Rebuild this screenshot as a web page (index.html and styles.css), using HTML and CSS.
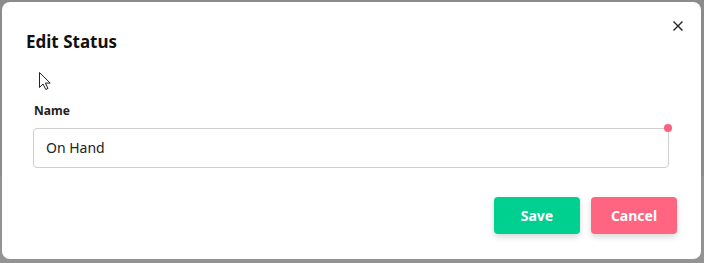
FILE: index.html
```html
<!DOCTYPE html>
<html>
<head>
<meta charset="utf-8">
<link rel="stylesheet" href="styles.css">
</head>
<body>
<div class="modal">
  <div class="header">
    <h2 class="title">Edit Status</h2>
    <button class="close" aria-label="Close">
      <svg width="10" height="10" viewBox="0 0 10 10"><path d="M1 1L9 9M9 1L1 9" stroke="#222" stroke-width="1.4" fill="none" stroke-linecap="square"/></svg>
    </button>
  </div>
  <svg class="cursor" width="14" height="20" viewBox="0 0 14 20"><path d="M1.5 1.5V16.5L5 13L7.8 18.5L10 17.4L7.3 12.1H12.2Z" fill="#fff" stroke="#222" stroke-width="1" stroke-linejoin="round"/></svg>
  <div class="body">
    <label class="label">Name</label>
    <div class="field">
      <div class="input">On Hand</div>
      <span class="dot"></span>
    </div>
  </div>
  <div class="footer">
    <button class="btn save">Save</button>
    <button class="btn cancel">Cancel</button>
  </div>
</div>
</body>
</html>
```
FILE: styles.css
```css
html, body { margin: 0; padding: 0; }
body {
  width: 704px;
  height: 263px;
  background: linear-gradient(#8b8b8b 0, #8b8b8b 176px, #939393 176px);
  font-family: "Noto Sans", "Open Sans", sans-serif;
  overflow: hidden;
}
.modal {
  position: relative;
  margin: 2px 0 0 2px;
  width: 699px;
  height: 257px;
  background: #fff;
  border-radius: 8px;
  box-sizing: border-box;
  padding-top: 26px;
}
.header {
  display: flex;
  justify-content: space-between;
  padding-left: 24px;
  height: 28px;
}
.title {
  margin: 0;
  font-size: 17px;
  font-weight: 700;
  line-height: 28px;
  color: #111;
}
.close {
  position: absolute;
  top: 16px;
  right: 15px;
  width: 16px;
  height: 16px;
  padding: 0;
  border: 0;
  background: none;
  display: flex;
  align-items: center;
  justify-content: center;
}
.cursor {
  position: absolute;
  left: 36px;
  top: 69px;
}
.body {
  padding: 47px 32px 0 31px;
}
.label {
  display: block;
  font-size: 12px;
  font-weight: 700;
  line-height: 16px;
  color: #222;
  margin-left: 1px;
}
.field {
  position: relative;
  margin-top: 9px;
}
.input {
  height: 40px;
  box-sizing: border-box;
  border: 1px solid #cfcfcf;
  border-radius: 4px;
  padding: 0 12px;
  font-size: 14px;
  line-height: 38px;
  color: #222;
}
.dot {
  position: absolute;
  right: -3px;
  top: -4px;
  width: 8px;
  height: 8px;
  border-radius: 50%;
  background: #ff5f7e;
}
.footer {
  display: flex;
  justify-content: flex-end;
  gap: 11px;
  padding-right: 24px;
  margin-top: 29px;
}
.btn {
  width: 86px;
  height: 37px;
  border: 0;
  border-radius: 4px;
  color: #fff;
  font-family: "Noto Sans", "Open Sans", sans-serif;
  font-size: 14px;
  font-weight: 700;
  box-shadow: 0 3px 6px rgba(0,0,0,0.16);
}
.save { background: #00d08f; }
.cancel { background: #ff6480; }
```
